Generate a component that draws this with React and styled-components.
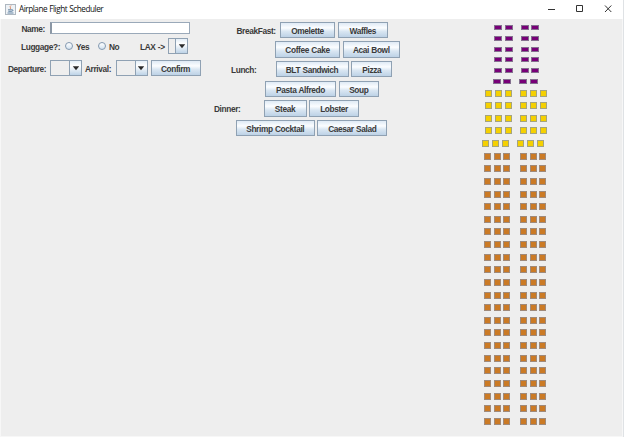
import React from "react";
import styled, { createGlobalStyle } from "styled-components";

const GlobalStyle = createGlobalStyle`
  html, body { margin: 0; padding: 0; background: #f6f6f6; overflow: hidden; }
  * { box-sizing: border-box; }
`;

const Window = styled.div`
  width: 624px;
  height: 437px;
  display: flex;
  flex-direction: column;
  background: #f7f7f7;
  border-right: 1px solid #dfe2e5;
  color: #3a3a3a;
  font: bold 8.3px/10px "Liberation Sans", Arial, sans-serif;
  letter-spacing: -0.37px;
  word-spacing: 0.4px;
`;

const TitleBar = styled.header`
  height: 19px;
  flex: none;
  display: flex;
  align-items: center;
  background: #fff;
  padding: 0 11px 1px 5px;
  color: #111;
`;

const Title = styled.h1`
  margin: 0 auto 0 3px;
  font: normal 8.2px/12px "Open Sans", "Noto Sans", sans-serif;
  letter-spacing: -0.46px;
  white-space: nowrap;
`;

const WindowControls = styled.div`
  display: flex;
  gap: 20px;
  svg { display: block; }
`;

const Content = styled.main`
  display: flex;
  width: 621px;
  height: 417px;
  margin-left: 1px;
  background: #eee;
`;

const FormPanel = styled.section`
  width: 206px;
  padding-top: 3px;
`;

const MenuPanel = styled.section`
  width: 225px;
  padding-top: 3px;
  display: flex;
  flex-direction: column;
  gap: 3.6px;
`;

const Row = styled.div`
  display: flex;
  align-items: center;
  height: ${(p) => p.$h || 16}px;
  margin-top: ${(p) => p.$top || 0}px;
  padding-left: ${(p) => p.$left || 0}px;
`;

const Label = styled.span`
  flex: none;
  width: ${(p) => p.$w}px;
  padding-top: 1.5px;
  white-space: nowrap;
`;

const NameInput = styled.input`
  width: 140px;
  height: 12px;
  padding: 0 2px;
  border: 1px solid #9aa9b9;
  border-left: 2px solid #8b97a5;
  border-radius: 0;
  background: #fff;
  outline: none;
  font: 8px "Liberation Sans", sans-serif;
`;

const Radio = styled.span`
  flex: none;
  width: 8px;
  height: 8px;
  margin-right: 3px;
  border: 1px solid #8399b0;
  border-radius: 50%;
  background: linear-gradient(#fff, #d3e2ef);
`;

const Combo = styled.div`
  flex: none;
  display: flex;
  width: ${(p) => p.$w}px;
  height: 16px;
  margin-right: ${(p) => p.$gap || 0}px;
  border: 1px solid #8fa1b3;
  background: #eee;
`;

const ComboArrow = styled.span`
  width: 12px;
  margin-left: auto;
  display: flex;
  align-items: center;
  justify-content: center;
  border-left: 1px solid #8fa1b3;
  background: linear-gradient(#e4eef7, #fff 35%, #bdd3e7);
`;

const Button = styled.button`
  flex: none;
  width: ${(p) => p.$w}px;
  height: 16.5px;
  margin: 0 ${(p) => p.$gap || 0}px 0 0;
  padding: 1.5px 0 0;
  border: 1px solid #8fa1b3;
  border-radius: 0;
  background: linear-gradient(#dfeaf5, #fbfdff 35%, #d9e6f2 60%, #bdd2e6);
  color: #3a3a3a;
  font: inherit;
  letter-spacing: inherit;
  word-spacing: inherit;
  white-space: nowrap;
`;

const SeatMap = styled.section`
  padding-top: 6px;
`;

const Cabin = styled.div`
  display: grid;
  grid-auto-rows: ${(p) => p.$pitch}px;
`;

const SeatRow = styled.div`
  display: flex;
  gap: ${(p) => p.$aisle}px;
  padding-left: ${(p) => p.$left}px;
`;

const SeatGroup = styled.div`
  display: flex;
  gap: ${(p) => p.$gap}px;
`;

const Seat = styled.span`
  width: ${(p) => p.$w}px;
  height: ${(p) => p.$h}px;
  border: 1px solid ${(p) => p.$edge};
  background: ${(p) => p.$fill};
`;

const cabins = [
  { rows: 6, perSide: 2, w: 8, h: 5, gap: 2.8, aisle: 7.8, pitch: 10.75, left: 62, lastLeft: 60.7, fill: "#780078", edge: "#84708f" },
  { rows: 5, perSide: 3, w: 7, h: 7, gap: 3, aisle: 8, pitch: 12.65, left: 53, lastLeft: 50.4, fill: "#f5d000", edge: "#a5a47d" },
  { rows: 22, perSide: 3, w: 7, h: 7, gap: 2.5, aisle: 10, pitch: 12.63, left: 52, lastLeft: 52.45, fill: "#cb7a25", edge: "#a08a7a" },
];

const meals = [
  { label: "BreakFast:", left: 29.5, labelW: 43.5, items: [["Omelette", 55], ["Waffles", 50]] },
  { left: 68, items: [["Coffee Cake", 65], ["Acai Bowl", 57]] },
  { label: "Lunch:", left: 24, labelW: 44.5, items: [["BLT Sandwich", 73], ["Pizza", 41]] },
  { left: 58, items: [["Pasta Alfredo", 71], ["Soup", 40]] },
  { label: "Dinner:", left: 7, labelW: 49.5, items: [["Steak", 43], ["Lobster", 49.5]] },
  { left: 29, items: [["Shrimp Cocktail", 78.5], ["Caesar Salad", 70]] },
];

function Select({ w, gap }) {
  return (
    <Combo $w={w} $gap={gap}>
      <ComboArrow>
        <svg width="8" height="5" viewBox="0 0 8 5"><path d="M.8.3h6.4L4 4.3z" fill="#2a2a2a" /></svg>
      </ComboArrow>
    </Combo>
  );
}

function JavaIcon() {
  return (
    <svg width="11" height="11" viewBox="0 0 11 11" fill="none">
      <rect x=".5" y=".5" width="10" height="10" fill="#eef2f6" stroke="#aeb7c0" />
      <path d="M6 1.5C3.8 3.2 6.8 3.5 5 5.3" stroke="#d9845c" />
      <path d="M3 5.8h4.2M3.3 7.3h3.6M2.5 9h6M7.2 5.8c1.4 0 1 1.2-.3 1.4" stroke="#587c9d" strokeWidth=".9" />
    </svg>
  );
}

export default function App() {
  return (
    <>
      <GlobalStyle />
      <Window>
        <TitleBar>
          <JavaIcon />
          <Title>Airplane Flight Scheduler</Title>
          <WindowControls>
            <svg width="8" height="8" viewBox="0 0 8 8"><path d="M0 4.5h7" stroke="#333" /></svg>
            <svg width="8" height="8" viewBox="0 0 8 8"><path d="M.5.5h6v6h-6z" fill="none" stroke="#333" /></svg>
            <svg width="8" height="8" viewBox="0 0 8 8"><path d="M1 .5l6.3 6.5M7.3.5L1 7" stroke="#333" /></svg>
          </WindowControls>
        </TitleBar>
        <Content>
          <FormPanel>
            <Row $h={12} $left={20.5}>
              <Label $w={28.5}>Name:</Label>
              <NameInput aria-label="Name" />
            </Row>
            <Row $top={4} $left={20}>
              <Label $w={44}>Luggage?:</Label>
              <Radio />
              <Label $w={22}>Yes</Label>
              <Radio />
              <Label $w={31}>No</Label>
              <Label $w={28}>LAX -&gt;</Label>
              <Select w={20} />
            </Row>
            <Row $top={6} $left={7}>
              <Label $w={42}>Departure:</Label>
              <Select w={32} gap={3} />
              <Label $w={30.5}>Arrival:</Label>
              <Select w={32} gap={3} />
              <Button $w={50}>Confirm</Button>
            </Row>
          </FormPanel>
          <MenuPanel>
            {meals.map((meal) => (
              <Row key={meal.items[0][0]} $left={meal.left}>
                {meal.label && <Label $w={meal.labelW}>{meal.label}</Label>}
                {meal.items.map(([name, w]) => (
                  <Button key={name} $w={w} $gap={2.8}>{name}</Button>
                ))}
              </Row>
            ))}
          </MenuPanel>
          <SeatMap>
            {cabins.map((c) => (
              <Cabin key={c.fill} $pitch={c.pitch}>
                {Array.from({ length: c.rows }, (_, r) => (
                  <SeatRow key={r} $aisle={c.aisle} $left={r === c.rows - 1 ? c.lastLeft : c.left}>
                    {[0, 1].map((side) => (
                      <SeatGroup key={side} $gap={c.gap}>
                        {Array.from({ length: c.perSide }, (_, s) => (
                          <Seat key={s} $w={c.w} $h={c.h} $fill={c.fill} $edge={c.edge} />
                        ))}
                      </SeatGroup>
                    ))}
                  </SeatRow>
                ))}
              </Cabin>
            ))}
          </SeatMap>
        </Content>
      </Window>
    </>
  );
}
